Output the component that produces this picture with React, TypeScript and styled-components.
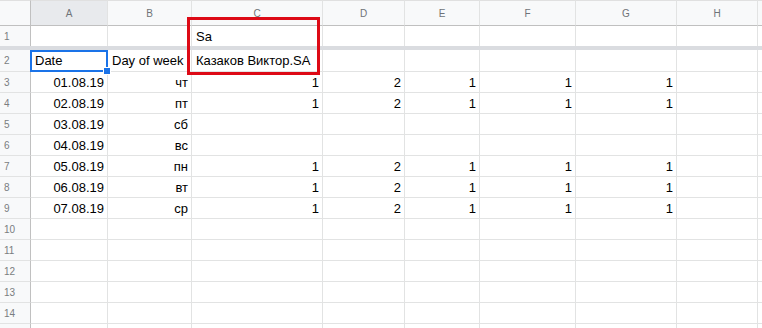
import React from "react";
import styled, { createGlobalStyle, css } from "styled-components";

const Global = createGlobalStyle`
  html, body { margin: 0; padding: 0; background: #fff; overflow: hidden; }
  body { font-family: "Liberation Sans", Arial, sans-serif; }
`;

const Wrapper = styled.div`
  position: relative;
  width: 762px;
  height: 328px;
  overflow: hidden;
`;

const Sheet = styled.div`
  display: grid;
  grid-template-columns: 31px 77px 84px 131px 82px 75px 96px 101px 81px 1fr;
  grid-template-rows: 26px 20px 4px 22px repeat(13, 21px);
  font-family: "Liberation Sans", Arial, sans-serif;
`;

const Corner = styled.div`
  background: #f8f9fa;
  border-right: 1px solid #c0c0c0;
  border-bottom: 1px solid #c0c0c0;
  border-top: 1px solid #e0e0e0;
`;

const ColHead = styled.div<{ $active?: boolean }>`
  background: ${(p) => (p.$active ? "#e8eaed" : "#f8f9fa")};
  border-top: 1px solid #e0e0e0;
  border-right: 1px solid #e2e3e3;
  border-bottom: 1px solid #c0c0c0;
  display: flex;
  align-items: center;
  justify-content: center;
  font-size: 10px;
  color: #6f7378;
  padding-top: 1px;
`;

const RowHead = styled.div<{ $noBottom?: boolean }>`
  background: #f8f9fa;
  border-right: 1px solid #c0c0c0;
  border-bottom: ${(p) => (p.$noBottom ? "none" : "1px solid #e2e3e3")};
  display: flex;
  align-items: center;
  padding-left: 4px;
  font-size: 10px;
  color: #7a7d80;
`;

const Cell = styled.div<{ $align?: "left" | "right"; $noBottom?: boolean; $selected?: boolean }>`
  position: relative;
  border-right: 1px solid #e2e3e3;
  border-bottom: ${(p) => (p.$noBottom ? "none" : "1px solid #e2e3e3")};
  display: flex;
  align-items: center;
  justify-content: ${(p) => (p.$align === "right" ? "flex-end" : "flex-start")};
  padding: 0 3px 0 4px;
  font-size: 13px;
  color: #000;
  white-space: nowrap;
  overflow: visible;
  ${(p) =>
    p.$selected &&
    css`
      &::after {
        content: "";
        position: absolute;
        top: 0;
        left: -1px;
        right: -1px;
        bottom: -1px;
        border: 2px solid #1a73e8;
        pointer-events: none;
      }
      &::before {
        content: "";
        position: absolute;
        right: -4px;
        bottom: -4px;
        width: 6px;
        height: 6px;
        background: #1a73e8;
        border: 1px solid #fff;
        z-index: 2;
      }
    `}
`;

const FrozenBar = styled.div`
  grid-column: 1 / -1;
  background: #dadce0;
`;

const RedBox = styled.div`
  position: absolute;
  left: 187px;
  top: 17px;
  width: 133px;
  height: 58px;
  box-sizing: border-box;
  border: 3px solid #dd0a16;
  pointer-events: none;
`;

const letters = ["A", "B", "C", "D", "E", "F", "G", "H", ""];
const dates = ["01.08.19", "02.08.19", "03.08.19", "04.08.19", "05.08.19", "06.08.19", "07.08.19"];
const days = ["чт", "пт", "сб", "вс", "пн", "вт", "ср"];
const nums = ["1", "2", "1", "1", "1"];

export default function App() {
  const dataRows: React.ReactNode[] = [];
  for (let r = 3; r <= 15; r++) {
    const i = r - 3;
    const hasData = i < 7;
    const weekend = hasData && (days[i] === "сб" || days[i] === "вс");
    dataRows.push(
      <React.Fragment key={r}>
        <RowHead>{r <= 14 ? r : ""}</RowHead>
        <Cell $align="right">{hasData ? dates[i] : ""}</Cell>
        <Cell $align="right">{hasData ? days[i] : ""}</Cell>
        {nums.map((n, k) => (
          <Cell key={k} $align="right">
            {hasData && !weekend ? n : ""}
          </Cell>
        ))}
        <Cell />
        <Cell />
      </React.Fragment>
    );
  }

  return (
    <Wrapper>
      <Global />
      <Sheet>
        <Corner />
        {letters.map((l, i) => (
          <ColHead key={i} $active={l === "A"}>
            {l}
          </ColHead>
        ))}

        <RowHead $noBottom>1</RowHead>
        <Cell $noBottom />
        <Cell $noBottom />
        <Cell $noBottom>Sa</Cell>
        <Cell $noBottom />
        <Cell $noBottom />
        <Cell $noBottom />
        <Cell $noBottom />
        <Cell $noBottom />
        <Cell $noBottom />

        <FrozenBar />

        <RowHead>2</RowHead>
        <Cell $selected>Date</Cell>
        <Cell>Day of week</Cell>
        <Cell>Казаков Виктор.SA</Cell>
        <Cell />
        <Cell />
        <Cell />
        <Cell />
        <Cell />
        <Cell />

        {dataRows}
      </Sheet>
      <RedBox />
    </Wrapper>
  );
}
